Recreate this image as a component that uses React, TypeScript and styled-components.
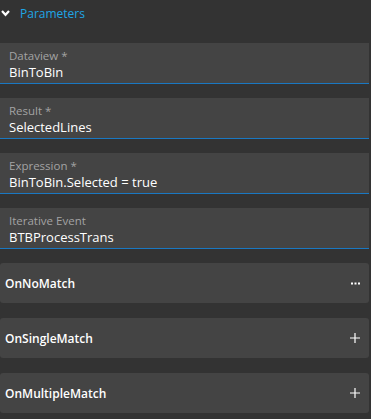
import styled, { createGlobalStyle } from "styled-components";

const GlobalStyle = createGlobalStyle`
  html, body {
    margin: 0;
    padding: 0;
    background: #333333;
  }
  body {
    font-family: "Open Sans", Lato, sans-serif;
  }
  * {
    box-sizing: border-box;
  }
`;

const Panel = styled.div`
  width: 369px;
  display: flex;
  flex-direction: column;
`;

const Header = styled.div`
  display: flex;
  align-items: center;
  gap: 10px;
  height: 27px;
  padding-left: 1px;
  color: #1ea6e6;
  font-size: 12px;
  margin-bottom: 16px;
`;

const Fields = styled.div`
  display: flex;
  flex-direction: column;
  gap: 14px;
`;

const Field = styled.div`
  background: #444444;
  border-bottom: 1px solid #1a78c2;
  padding: 5px 9px 0;
  height: 41px;
  display: flex;
  flex-direction: column;
`;

const Label = styled.span`
  color: #a3a3a3;
  font-size: 11.5px;
  line-height: 15px;
`;

const Value = styled.span`
  color: #ffffff;
  font-size: 13px;
  line-height: 18px;
`;

const Rows = styled.div`
  display: flex;
  flex-direction: column;
  gap: 15px;
  margin-top: 14px;
`;

const Row = styled.div`
  background: #444444;
  border-radius: 3px;
  height: 40px;
  display: flex;
  align-items: center;
  justify-content: space-between;
  padding: 0 9px 0 5px;
  color: #ffffff;
  font-size: 12px;
  font-weight: 600;
`;

const Chevron = () => (
  <svg width="9" height="7" viewBox="0 0 9 7">
    <path d="M1 1 L4.5 4.8 L8 1" stroke="#ffffff" strokeWidth="2.2" fill="none" />
  </svg>
);

const Dots = () => (
  <svg width="9" height="3" viewBox="0 0 9 3">
    <rect x="0" y="0.5" width="2" height="2" fill="#ffffff" />
    <rect x="3.5" y="0.5" width="2" height="2" fill="#ffffff" />
    <rect x="7" y="0.5" width="2" height="2" fill="#ffffff" />
  </svg>
);

const Plus = () => (
  <svg width="10" height="10" viewBox="0 0 10 10">
    <path d="M5 0 V10 M0 5 H10" stroke="#ffffff" strokeWidth="1.2" />
  </svg>
);

const fields = [
  { label: "Dataview *", value: "BinToBin" },
  { label: "Result *", value: "SelectedLines" },
  { label: "Expression *", value: "BinToBin.Selected = true" },
  { label: "Iterative Event", value: "BTBProcessTrans" },
];

const rows = [
  { name: "OnNoMatch", icon: <Dots /> },
  { name: "OnSingleMatch", icon: <Plus /> },
  { name: "OnMultipleMatch", icon: <Plus /> },
];

export default function App() {
  return (
    <>
      <GlobalStyle />
      <Panel>
        <Header>
          <Chevron />
          <span>Parameters</span>
        </Header>
        <Fields>
          {fields.map((f) => (
            <Field key={f.label}>
              <Label>{f.label}</Label>
              <Value>{f.value}</Value>
            </Field>
          ))}
        </Fields>
        <Rows>
          {rows.map((r) => (
            <Row key={r.name}>
              <span>{r.name}</span>
              {r.icon}
            </Row>
          ))}
        </Rows>
      </Panel>
    </>
  );
}
